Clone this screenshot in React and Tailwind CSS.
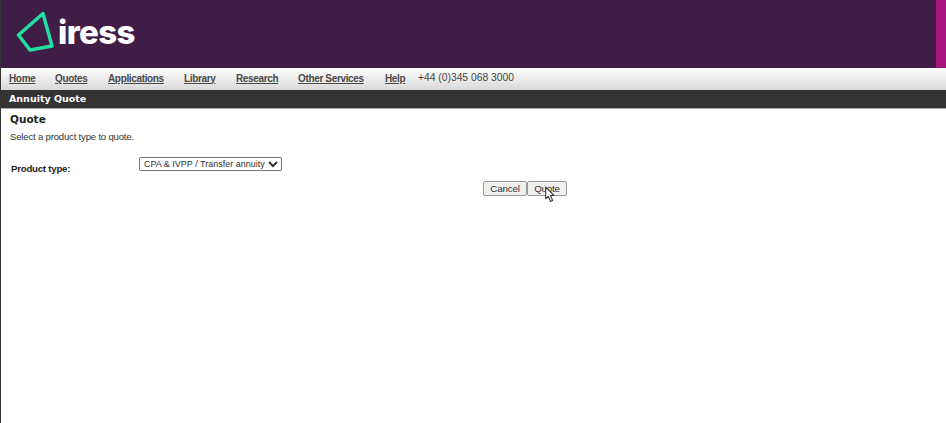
const navItems = [
  ["Home", "w-[46px]"],
  ["Quotes", "w-[53px]"],
  ["Applications", "w-[76px]"],
  ["Library", "w-[52px]"],
  ["Research", "w-[62px]"],
  ["Other Services", "w-[87px]"],
  ["Help", "w-[33px]"],
];

function Logo() {
  return (
    <div className="flex items-center">
      <svg width="38" height="42" viewBox="0 0 38 42" fill="none">
        <path d="M27 2.5 L2.5 24 L14 39 L36 35 Z" stroke="#22dfa0" strokeWidth="3.5" strokeLinejoin="round" />
      </svg>
      <span className="ml-[4px] font-['Inter',sans-serif] text-[33px] leading-none font-extrabold tracking-[-0.6px] text-white">iress</span>
    </div>
  );
}

export default function App() {
  return (
    <div className="relative h-[423px] w-[946px] overflow-hidden border-l border-[#333] bg-white font-['Liberation_Sans',Arial,sans-serif]">
      {/* Header */}
      <div className="flex h-[68px] items-start justify-between bg-[#3f1d47]">
        <div className="pt-[11px] pl-[15px]">
          <Logo />
        </div>
        <div className="h-full w-[10px] bg-[#a8157f]" />
      </div>

      {/* Nav */}
      <nav className="flex h-[22px] items-center bg-gradient-to-b from-white to-[#d9d9d9] pb-[2px] pl-2 text-[10px] tracking-[-0.35px] text-[#4a4a4a]">
        {navItems.map(([label, width]) => (
          <a key={label} className={`${width} font-bold underline`}>{label}</a>
        ))}
        <span className="text-[10.3px] tracking-normal text-[#444]">+44 (0)345 068 3000</span>
      </nav>

      {/* Title bar */}
      <div className="flex h-[19px] items-center border-b border-[#aaa] bg-[#333] pl-2 font-['DejaVu_Sans',sans-serif] text-[9.5px] font-bold text-white">
        Annuity Quote
      </div>

      {/* Content */}
      <div className="pt-[2px] pl-[9px]">
        <h1 className="font-['DejaVu_Sans',sans-serif] text-[10.5px] leading-[16px] font-bold text-[#222]">Quote</h1>
        <p className="mt-[4px] text-[9.6px] leading-[12px] tracking-[-0.2px] text-[#333]">Select a product type to quote.</p>
        <div className="mt-[14px] flex items-start">
          <label className="mt-[6px] ml-[1px] w-[128px] text-[9.6px] leading-[12px] font-bold tracking-[-0.2px] text-[#222]">Product type:</label>
          <select className="h-[14px] w-[143px] rounded-[2px] border border-[#777] bg-white text-[9px] leading-[12px] text-[#333]">
            <option>CPA &amp; IVPP / Transfer annuity</option>
          </select>
        </div>
        <div className="mt-[6px] ml-[473px] flex text-[9.8px] tracking-[-0.2px] text-[#333]">
          <button className="h-[15px] w-[44px] rounded-[2px] border border-[#999] bg-[#efefef] leading-[13px]">Cancel</button>
          <button className="h-[15px] w-[40px] rounded-[2px] border border-[#999] bg-[#efefef] leading-[13px]">Quote</button>
        </div>
      </div>

      {/* Mouse pointer */}
      <svg className="absolute top-[186px] left-[543px]" width="13" height="17" viewBox="0 0 12 16">
        <path d="M1.5 1 V12 L4 9.8 L6 14.5 L8 13.6 L6 9 H9.5 Z" fill="#fff" stroke="#333" strokeWidth="1" strokeLinejoin="round" />
      </svg>
    </div>
  );
}
